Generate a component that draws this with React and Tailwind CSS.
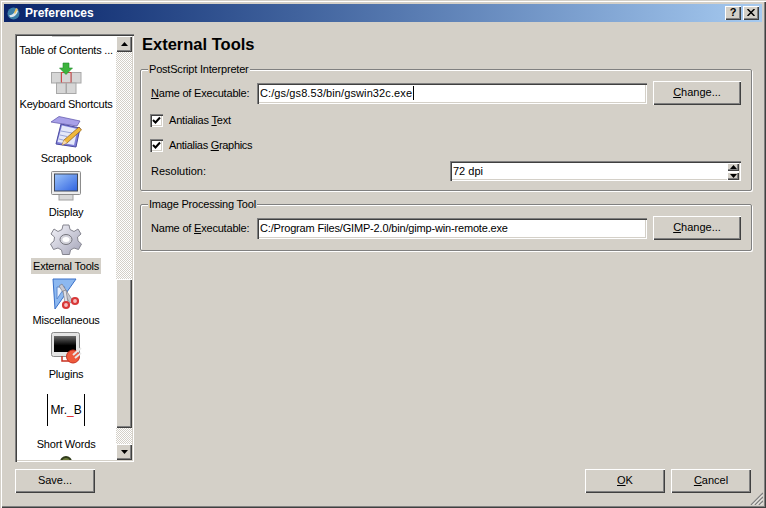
import React from "react";

const raised =
  "bg-[#d4d0c8] shadow-[inset_1px_1px_0_#fff,inset_-1px_-1px_0_#404040,inset_-2px_-2px_0_#808080]";
const sunken =
  "bg-white shadow-[inset_1px_1px_0_#808080,inset_2px_2px_0_#404040,inset_-1px_-1px_0_#fff,inset_-2px_-2px_0_#d4d0c8]";
const dither =
  "bg-[repeating-conic-gradient(#fff_0_25%,#d4d0c8_0_50%)] bg-[length:2px_2px]";

const Arrow = ({ up }) => (
  <svg width="7" height="4" viewBox="0 0 7 4">
    <path d={up ? "M3.5 0L7 4H0Z" : "M0 0H7L3.5 4Z"} fill="#000" />
  </svg>
);

const Btn = ({ children, w = "w-[80px]", h = "h-6" }) => (
  <button className={`${raised} ${w} ${h} shrink-0 flex items-center justify-center text-black pb-[2px]`}>
    {children}
  </button>
);

const Field = ({ children, caret, className = "" }) => (
  <div className={`${sunken} w-[390px] h-[21px] flex items-center pl-[3px] text-black`}>
    <span className={`${caret ? "border-r border-black pr-px" : ""} ${className}`}>{children}</span>
  </div>
);

const Check = ({ children, className = "" }) => (
  <div className="flex items-center h-[13px]">
    <div className={`${sunken} w-[13px] h-[13px] flex items-center justify-center`}>
      <svg width="9" height="9" viewBox="0 0 9 9">
        <path d="M1 4L3.5 6.5L8 1.5" fill="none" stroke="#000" strokeWidth="2" />
      </svg>
    </div>
    <span className={`ml-[6px] -mt-px ${className}`}>{children}</span>
  </div>
);

const Group = ({ title, className, children }) => (
  <fieldset
    className={`border border-[#808080] rounded-[2px] w-[610px] ml-px px-[10px] shadow-[inset_1px_1px_0_#fff,1px_1px_0_#fff] ${className}`}
  >
    <legend className="-ml-[3px] px-px bg-[#d4d0c8] leading-[13px] tracking-[-0.2px]">{title}</legend>
    {children}
  </fieldset>
);

const KeyCap = ({ x, y, red }) => (
  <rect x={x} y={y} width="9.5" height="10.5" fill="#d6d6d6" stroke={red ? "#d04848" : "#a8a8a8"} />
);

const KeyboardIcon = () => (
  <svg width="32" height="32" viewBox="0 0 32 32">
    <KeyCap x="1.5" y="10.5" />
    <KeyCap x="21.5" y="10.5" />
    <KeyCap x="11.5" y="10.5" red />
    <KeyCap x="6.5" y="21" />
    <KeyCap x="16.5" y="21" />
    <path d="M13 1H19V6H22.5L16 12.5L9.5 6H13Z" fill="#3cb43c" stroke="#1e8a2c" strokeWidth="0.6" />
  </svg>
);

const ScrapbookIcon = () => (
  <svg width="32" height="32" viewBox="0 0 32 32">
    <path d="M6 28L11 8L30 12L26 31Z" fill="#7f7fd8" stroke="#4a4aa0" />
    <path d="M7.5 26L12 9.5L27.5 13L24 29Z" fill="#e4e8fa" />
    <path d="M11 15L22 17M10 19L17 20.5M9 23L15 24.5" stroke="#9aa6d8" />
    <path d="M1 6L9 0.5L30 5L27 10L7 7Z" fill="#a8a0e8" stroke="#5a52a8" strokeWidth="0.7" />
    <path d="M29 11L14 24L12 29L17 27L31.5 14Z" fill="#f0b83c" stroke="#8a5a1a" strokeWidth="0.7" />
    <path d="M14 24L12 29L17 27Z" fill="#f4d8b0" />
  </svg>
);

const DisplayIcon = () => (
  <svg width="32" height="32" viewBox="0 0 32 32">
    <defs>
      <linearGradient id="scr" x1="0" y1="0" x2="1" y2="1">
        <stop offset="0" stopColor="#9cc4fa" />
        <stop offset="1" stopColor="#2f62e0" />
      </linearGradient>
    </defs>
    <rect x="9" y="24" width="14" height="6" fill="#d8d8d8" stroke="#a0a0a0" />
    <rect x="1.5" y="1.5" width="29" height="23" rx="1" fill="#ececec" stroke="#8c8c8c" />
    <rect x="4.5" y="4" width="23" height="17" fill="url(#scr)" stroke="#404858" />
  </svg>
);

const GEAR_PATH =
  "M13 1H19L20 5.5L24 7.5L28 5L31 10L27.5 13L28 17L31.5 20L28.5 25.5L24 24L20.5 26L19.5 30.5H12.5L11.5 26L8 24L3.5 25.5L0.5 20L4 17L4.5 13L1 10L4 5L8 7.5L12 5.5Z";

const GearIcon = () => (
  <svg width="32" height="32" viewBox="0 0 32 32">
    <defs>
      <linearGradient id="gear" x1="0" y1="0" x2="1" y2="1">
        <stop offset="0" stopColor="#f4f4fa" />
        <stop offset="1" stopColor="#a4a4b8" />
      </linearGradient>
    </defs>
    <path d={GEAR_PATH} fill="url(#gear)" stroke="#85858f" strokeLinejoin="round" />
    <ellipse cx="16" cy="15.5" rx="6" ry="5" fill="#d4d4dc" stroke="#77777f" />
    <ellipse cx="16" cy="15.5" rx="3.5" ry="2.5" fill="#fff" />
  </svg>
);

const MiscIcon = () => (
  <svg width="32" height="32" viewBox="0 0 32 32">
    <path d="M3 1H26L5 31Z" fill="#8cb8f0" stroke="#3a70c8" />
    <path d="M7 9H15L7 21Z" fill="#e8f0fc" stroke="#5a88d0" />
    <path d="M9 8L20 25L23 23L12 6Z" fill="#c8c8d0" stroke="#70707a" strokeWidth="0.6" />
    <path d="M13 13L15 25L18 25L16 12Z" fill="#e0e0e6" stroke="#70707a" strokeWidth="0.6" />
    <circle cx="16" cy="27" r="3" fill="#f4c0c0" stroke="#d83838" strokeWidth="2.2" />
    <circle cx="25" cy="23" r="3" fill="#f4c0c0" stroke="#d83838" strokeWidth="2.2" />
  </svg>
);

const PluginsIcon = () => (
  <svg width="32" height="32" viewBox="0 0 32 32">
    <defs>
      <linearGradient id="blk" x1="0" y1="0" x2="0" y2="1">
        <stop offset="0" stopColor="#6a6a6a" />
        <stop offset="0.6" stopColor="#000" />
      </linearGradient>
    </defs>
    <rect x="1.5" y="0.5" width="28" height="24" rx="2" fill="#e4e4e4" stroke="#8a8a8a" />
    <rect x="4" y="4" width="22" height="16" fill="url(#blk)" />
    <path d="M12 24V29H22" fill="none" stroke="#c83020" strokeWidth="1.5" />
    <circle cx="23" cy="24.5" r="6.5" fill="#ee5a3c" stroke="#c83020" />
    <path d="M23 23L31 16M25 26L31 21" stroke="#e8e8e8" strokeWidth="2" />
  </svg>
);

const ShortWordsIcon = () => (
  <div className="h-[48px] w-[38px] flex items-center justify-between">
    <div className="w-px h-[32px] bg-black" />
    <span className="text-[12px] leading-none whitespace-pre">
      Mr.<span className="text-[#e02020]">_</span>B
    </span>
    <div className="w-px h-[32px] bg-black" />
  </div>
);

const items = [
  {
    label: "Table of Contents ...",
    h: "h-[54px]",
    icon: (
      <div className="h-[32px] w-[28px] flex items-end pb-[3px]">
        <div className="w-full h-[2px] bg-[#c8c8c8]" />
      </div>
    ),
  },
  { label: "Keyboard Shortcuts", h: "h-[54px]", icon: <KeyboardIcon /> },
  { label: "Scrapbook", h: "h-[54px]", icon: <ScrapbookIcon /> },
  { label: "Display", h: "h-[54px]", icon: <DisplayIcon /> },
  { label: "External Tools", h: "h-[54px]", icon: <GearIcon />, selected: true },
  { label: "Miscellaneous", h: "h-[54px]", icon: <MiscIcon /> },
  { label: "Plugins", h: "h-[54px]", icon: <PluginsIcon /> },
  { label: "Short Words", h: "h-[70px]", icon: <ShortWordsIcon /> },
];

const Sidebar = () => (
  <div className={`${sunken} w-[119px] h-[428px] p-[2px] flex shrink-0`}>
    <div className="w-[99px] h-full overflow-hidden">
      <div className="-mt-[28px] flex flex-col items-center">
        {items.map((item) => (
          <div key={item.label} className={`${item.h} flex flex-col items-center shrink-0`}>
            {item.icon}
            <div
              className={`mt-[2px] h-[16px] leading-[16px] tracking-[-0.2px] whitespace-nowrap px-[2px] ${
                item.selected ? "bg-[#d4d0c8]" : ""
              }`}
            >
              {item.label}
            </div>
          </div>
        ))}
        <svg width="32" height="8" viewBox="0 0 32 8" className="shrink-0">
          <circle cx="16" cy="6" r="5" fill="#6b7a3a" stroke="#2f3a1a" strokeWidth="2" />
        </svg>
      </div>
    </div>
    <div className="w-4 h-full flex flex-col ml-[1px]">
      <div className={`${raised} h-4 flex items-center justify-center shrink-0`}>
        <Arrow up />
      </div>
      <div className={`${dither} h-[227px]`} />
      <div className={`${raised} h-[149px]`} />
      <div className={`${dither} flex-1`} />
      <div className={`${raised} h-4 flex items-center justify-center shrink-0`}>
        <Arrow />
      </div>
    </div>
  </div>
);

const Panel = () => (
  <div className="ml-[5px] flex-1">
    <h1 className="ml-[3px] text-[16.5px] leading-[20px] font-bold">External Tools</h1>
    <Group title="PostScript Interpreter" className="mt-[9px] h-[128px]">
      <div className="flex items-center h-[24px] mt-[5px]">
        <span className="w-[106px] whitespace-nowrap tracking-[-0.2px] -mt-px">
          <u>N</u>ame of Executable:
        </span>
        <Field caret className="tracking-[0.1px]">
          C:/gs/gs8.53/bin/gswin32c.exe
        </Field>
        <div className="ml-[6px]">
          <Btn w="w-[88px]">
            <span>
              <u>C</u>hange...
            </span>
          </Btn>
        </div>
      </div>
      <div className="flex flex-col gap-[12px] mt-[9px] -ml-px">
        <Check className="tracking-[-0.2px]">
          Antialias <u>T</u>ext
        </Check>
        <Check className="tracking-[-0.3px]">
          Antialias <u>G</u>raphics
        </Check>
      </div>
      <div className="flex items-center h-[20px] mt-[9px]">
        <span className="w-[299px] -mt-px">Resolution:</span>
        <div className={`${sunken} w-[291px] h-[20px] flex items-center pl-[3px] pr-[2px]`}>
          <span className="flex-1">72 dpi</span>
          <div className="flex flex-col gap-px">
            <div className={`${raised} w-[12px] h-[8px] flex items-center justify-center`}>
              <Arrow up />
            </div>
            <div className={`${raised} w-[12px] h-[8px] flex items-center justify-center`}>
              <Arrow />
            </div>
          </div>
        </div>
      </div>
    </Group>
    <Group title="Image Processing Tool" className="mt-[7px] h-[53px]">
      <div className="flex items-center h-[24px] mt-[5px]">
        <span className="w-[106px] whitespace-nowrap tracking-[-0.2px] -mt-px">
          Name of <u>E</u>xecutable:
        </span>
        <Field className="tracking-[-0.17px]">C:/Program Files/GIMP-2.0/bin/gimp-win-remote.exe</Field>
        <div className="ml-[6px]">
          <Btn w="w-[88px]">
            <span>
              <u>C</u>hange...
            </span>
          </Btn>
        </div>
      </div>
    </Group>
  </div>
);

export default function App() {
  return (
    <div className="relative w-[766px] h-[508px] bg-[#d4d0c8] p-[4px] text-[11px] leading-[14px] text-black font-['Liberation_Sans',sans-serif] overflow-hidden shadow-[inset_1px_1px_0_#d4d0c8,inset_2px_2px_0_#fff,inset_-1px_-1px_0_#404040,inset_-2px_-2px_0_#808080]">
      <div className="h-[18px] flex items-center bg-gradient-to-r from-[#0a246a] to-[#a6caf0] pl-[3px] pr-[3px]">
        <svg width="13" height="13" viewBox="0 0 13 13" className="shrink-0">
          <circle cx="6.5" cy="6.5" r="6" fill="#3c7fa8" />
          <path d="M2 8C4 9 8 6 9 2L11 4C10 8 6 11 3 10Z" fill="#dce8f0" />
          <path d="M9 1L11 2L8 7L7 6Z" fill="#e8c060" />
        </svg>
        <span className="ml-[5px] flex-1 text-white font-bold text-[12px]">Preferences</span>
        <Btn w="w-[16px]" h="h-[14px]">
          <span className="font-bold text-[11px] leading-none">?</span>
        </Btn>
        <div className="ml-[2px]">
          <Btn w="w-[16px]" h="h-[14px]">
            <svg width="8" height="7" viewBox="0 0 8 7">
              <path d="M0.5 0L7.5 7M7.5 0L0.5 7" stroke="#000" strokeWidth="1.5" />
            </svg>
          </Btn>
        </div>
      </div>
      <div className="pl-[11px] pt-[12px] pr-[11px]">
        <div className="flex">
          <Sidebar />
          <Panel />
        </div>
        <div className="flex mt-[7px]">
          <Btn>Save...</Btn>
          <div className="flex-1" />
          <Btn>
            <span>
              <u>O</u>K
            </span>
          </Btn>
          <div className="ml-[6px]">
            <Btn>
              <span>
                <u>C</u>ancel
              </span>
            </Btn>
          </div>
        </div>
      </div>
      <svg width="13" height="13" viewBox="0 0 13 13" className="absolute right-[3px] bottom-[3px]">
        <path d="M1 13L13 1M5 13L13 5M9 13L13 9" stroke="#808080" strokeWidth="1.4" />
        <path d="M2.5 13L13 2.5M6.5 13L13 6.5M10.5 13L13 10.5" stroke="#fff" strokeWidth="0.8" />
      </svg>
    </div>
  );
}
